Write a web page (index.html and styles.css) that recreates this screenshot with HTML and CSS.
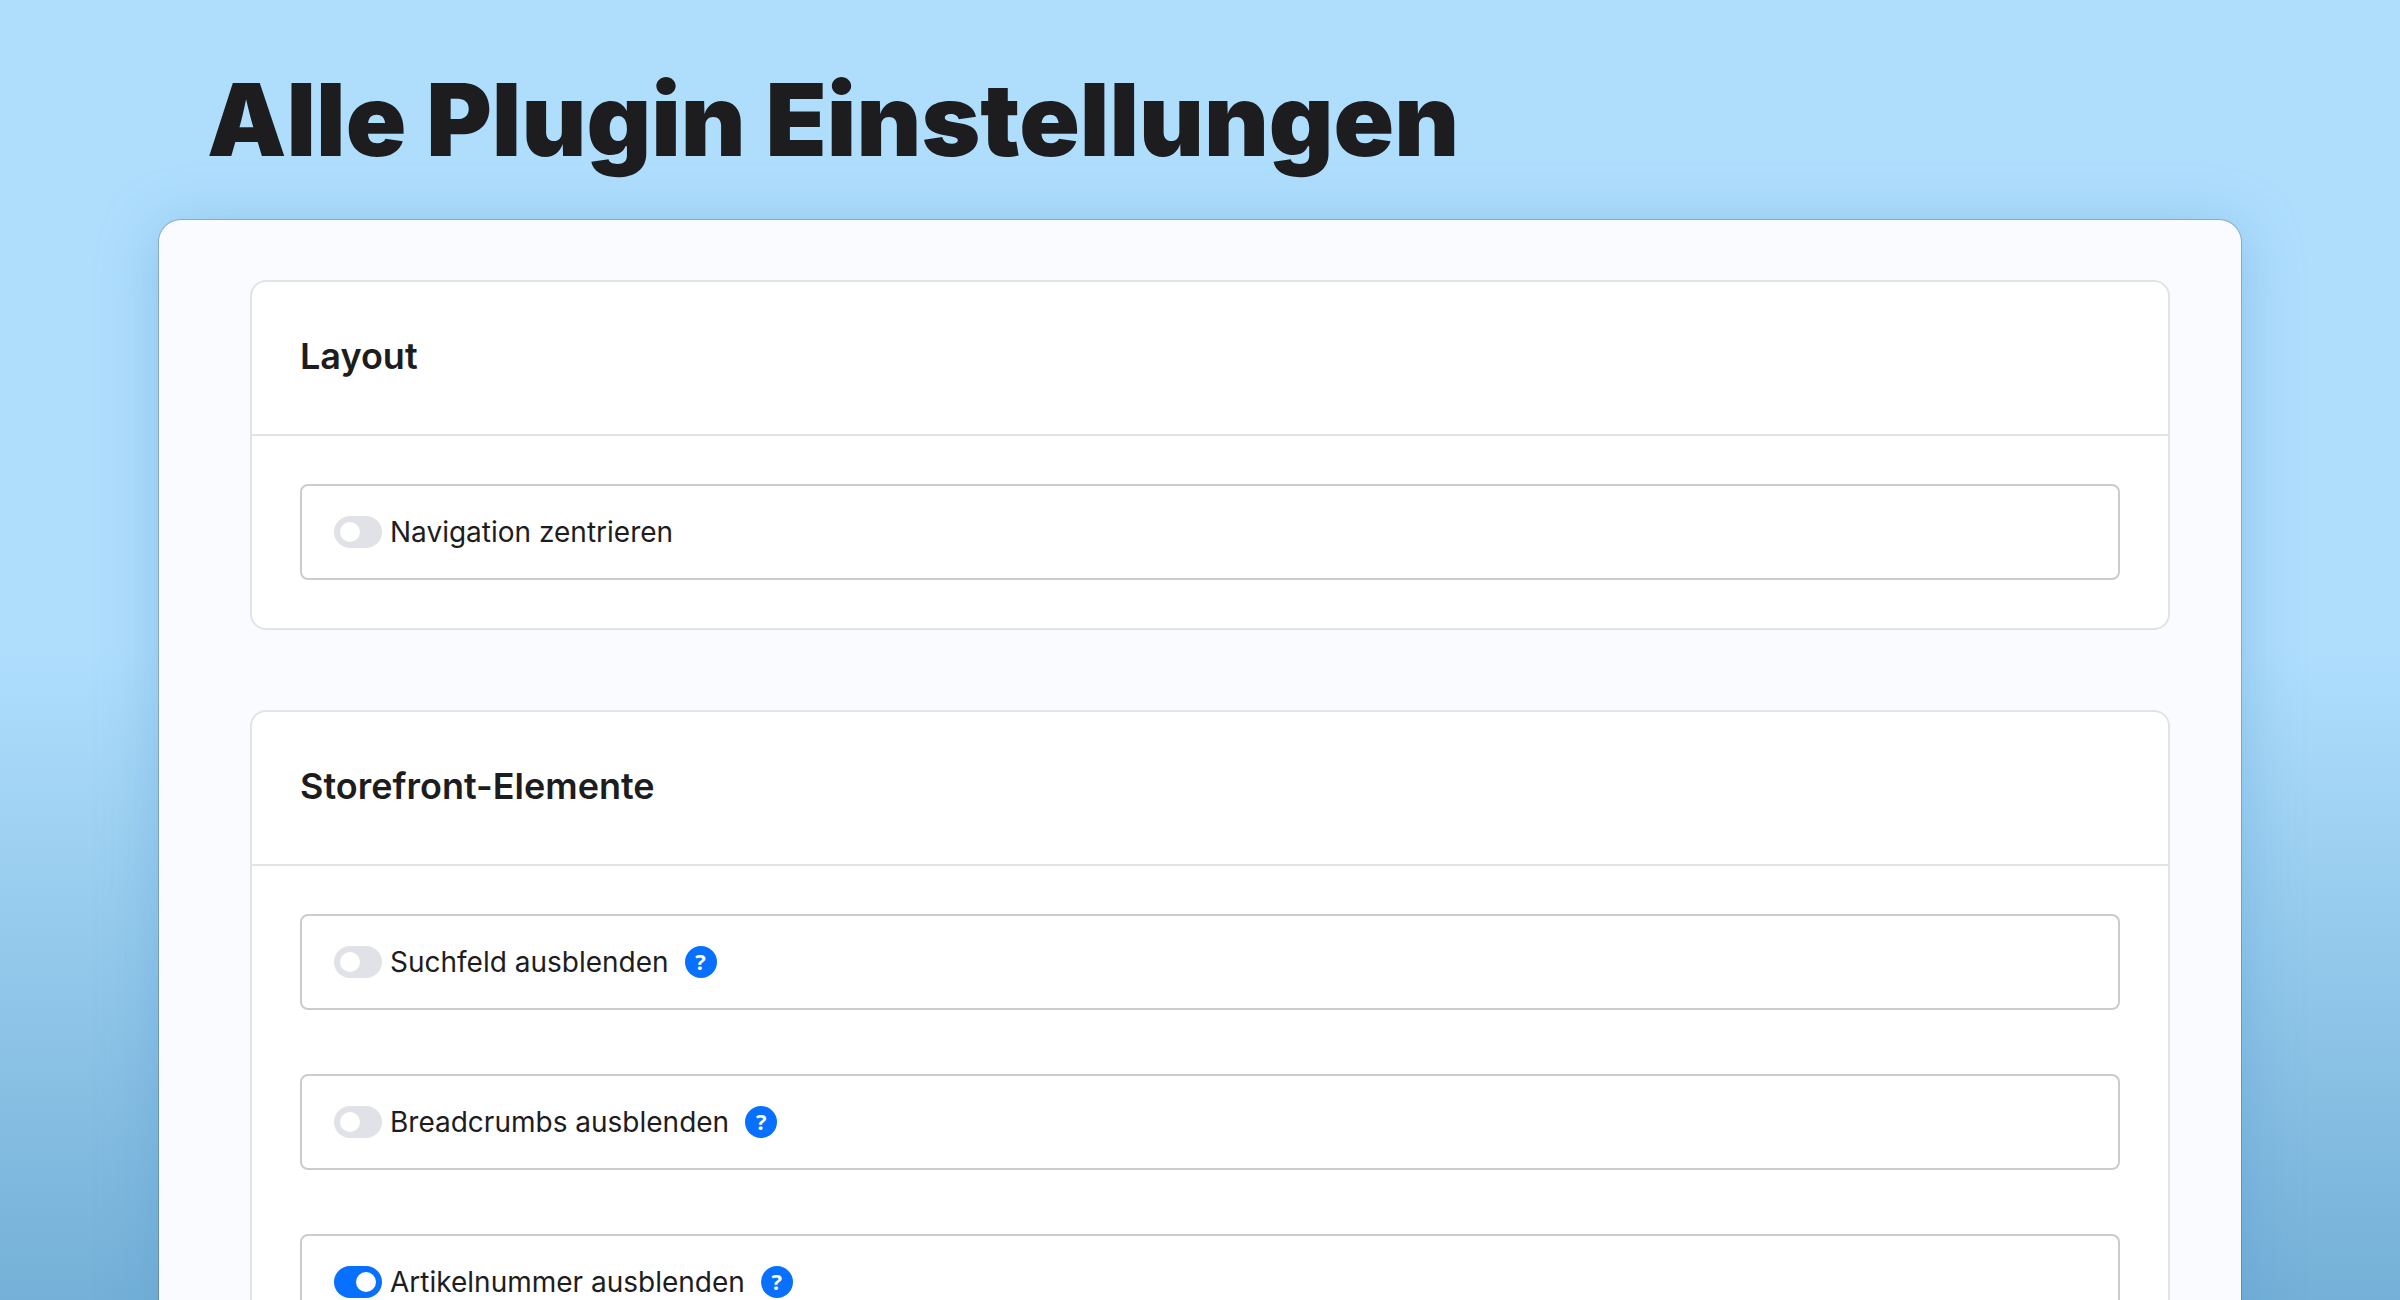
FILE: index.html
```html
<!DOCTYPE html>
<html lang="de">

<head>
    <meta charset="UTF-8">
    <meta name="viewport" content="width=device-width, initial-scale=1.0">
    <title>Alle Plugin Einstellungen</title>
    <link rel="stylesheet" href="styles.css">
</head>

<body>
    <h1 class="page-title">Alle Plugin Einstellungen</h1>

    <main class="panel">
        <section class="card">
            <h2 class="card-title">Layout</h2>
            <div class="card-body">
                <div class="field">
                    <input type="checkbox" class="switch" id="centerNavigation">
                    <label for="centerNavigation">Navigation zentrieren</label>
                </div>
            </div>
        </section>

        <section class="card">
            <h2 class="card-title">Storefront-Elemente</h2>
            <div class="card-body">
                <div class="field">
                    <input type="checkbox" class="switch" id="hideSearch">
                    <label for="hideSearch">Suchfeld ausblenden</label>
                    <button type="button" class="help">?</button>
                </div>
                <div class="field">
                    <input type="checkbox" class="switch" id="hideBreadcrumbs">
                    <label for="hideBreadcrumbs">Breadcrumbs ausblenden</label>
                    <button type="button" class="help">?</button>
                </div>
                <div class="field">
                    <input type="checkbox" class="switch" id="hideProductNumber" checked>
                    <label for="hideProductNumber">Artikelnummer ausblenden</label>
                    <button type="button" class="help">?</button>
                </div>
            </div>
        </section>
    </main>
</body>

</html>
```
FILE: styles.css
```css
* {
    box-sizing: border-box;
}

body {
    height: 100vh;
    margin: 0;
    padding: 60px 159px 0;
    overflow: hidden;
    font-family: Inter, "Liberation Sans", sans-serif;
    color: #1d1d20;
    background: linear-gradient(#afdefd 50%, #74b0d7);
}

.page-title {
    margin: 0 48px 40px;
    font-size: 100px;
    font-weight: 900;
    line-height: 120px;
}

.panel {
    display: flex;
    flex-direction: column;
    gap: 80px;
    padding: 60px 71px 60px 91px;
    background: #fafbff;
    border-radius: 22px;
    box-shadow: 0 0 0 1px rgba(80, 80, 90, 0.3), 0 8px 60px rgba(80, 150, 205, 0.4);
}

.card {
    background: #fff;
    border: 2px solid #e2e3e7;
    border-radius: 16px;
}

.card-title {
    margin: 0;
    padding: 50px 48px 54px;
    border-bottom: 2px solid #e2e3e7;
    font-size: 36px;
    font-weight: 600;
    line-height: 48px;
}

.card-body {
    display: flex;
    flex-direction: column;
    gap: 64px;
    padding: 48px;
}

.field {
    display: flex;
    align-items: center;
    height: 96px;
    padding: 0 32px;
    border: 2px solid #cbccce;
    border-radius: 8px;
    font-size: 28px;
    line-height: 32px;
}

/* Toggle */
.switch {
    appearance: none;
    width: 48px;
    height: 32px;
    margin: 0 8px 0 0;
    padding: 6px;
    border-radius: 16px;
    background: #e1e2e7;
    cursor: pointer;
}

.switch::before {
    content: "";
    display: block;
    width: 20px;
    height: 20px;
    border-radius: 50%;
    background: #fff;
}

.switch:checked {
    background: #0870ff;
}

.switch:checked::before {
    margin-left: auto;
}

/* Help icon */
.help {
    width: 32px;
    height: 32px;
    margin: 0 0 0 16px;
    padding: 0 0 2px;
    border: 0;
    border-radius: 50%;
    background: #0870ff;
    color: #fff;
    font: 700 22px/30px "Open Sans", sans-serif;
    cursor: pointer;
}
```
